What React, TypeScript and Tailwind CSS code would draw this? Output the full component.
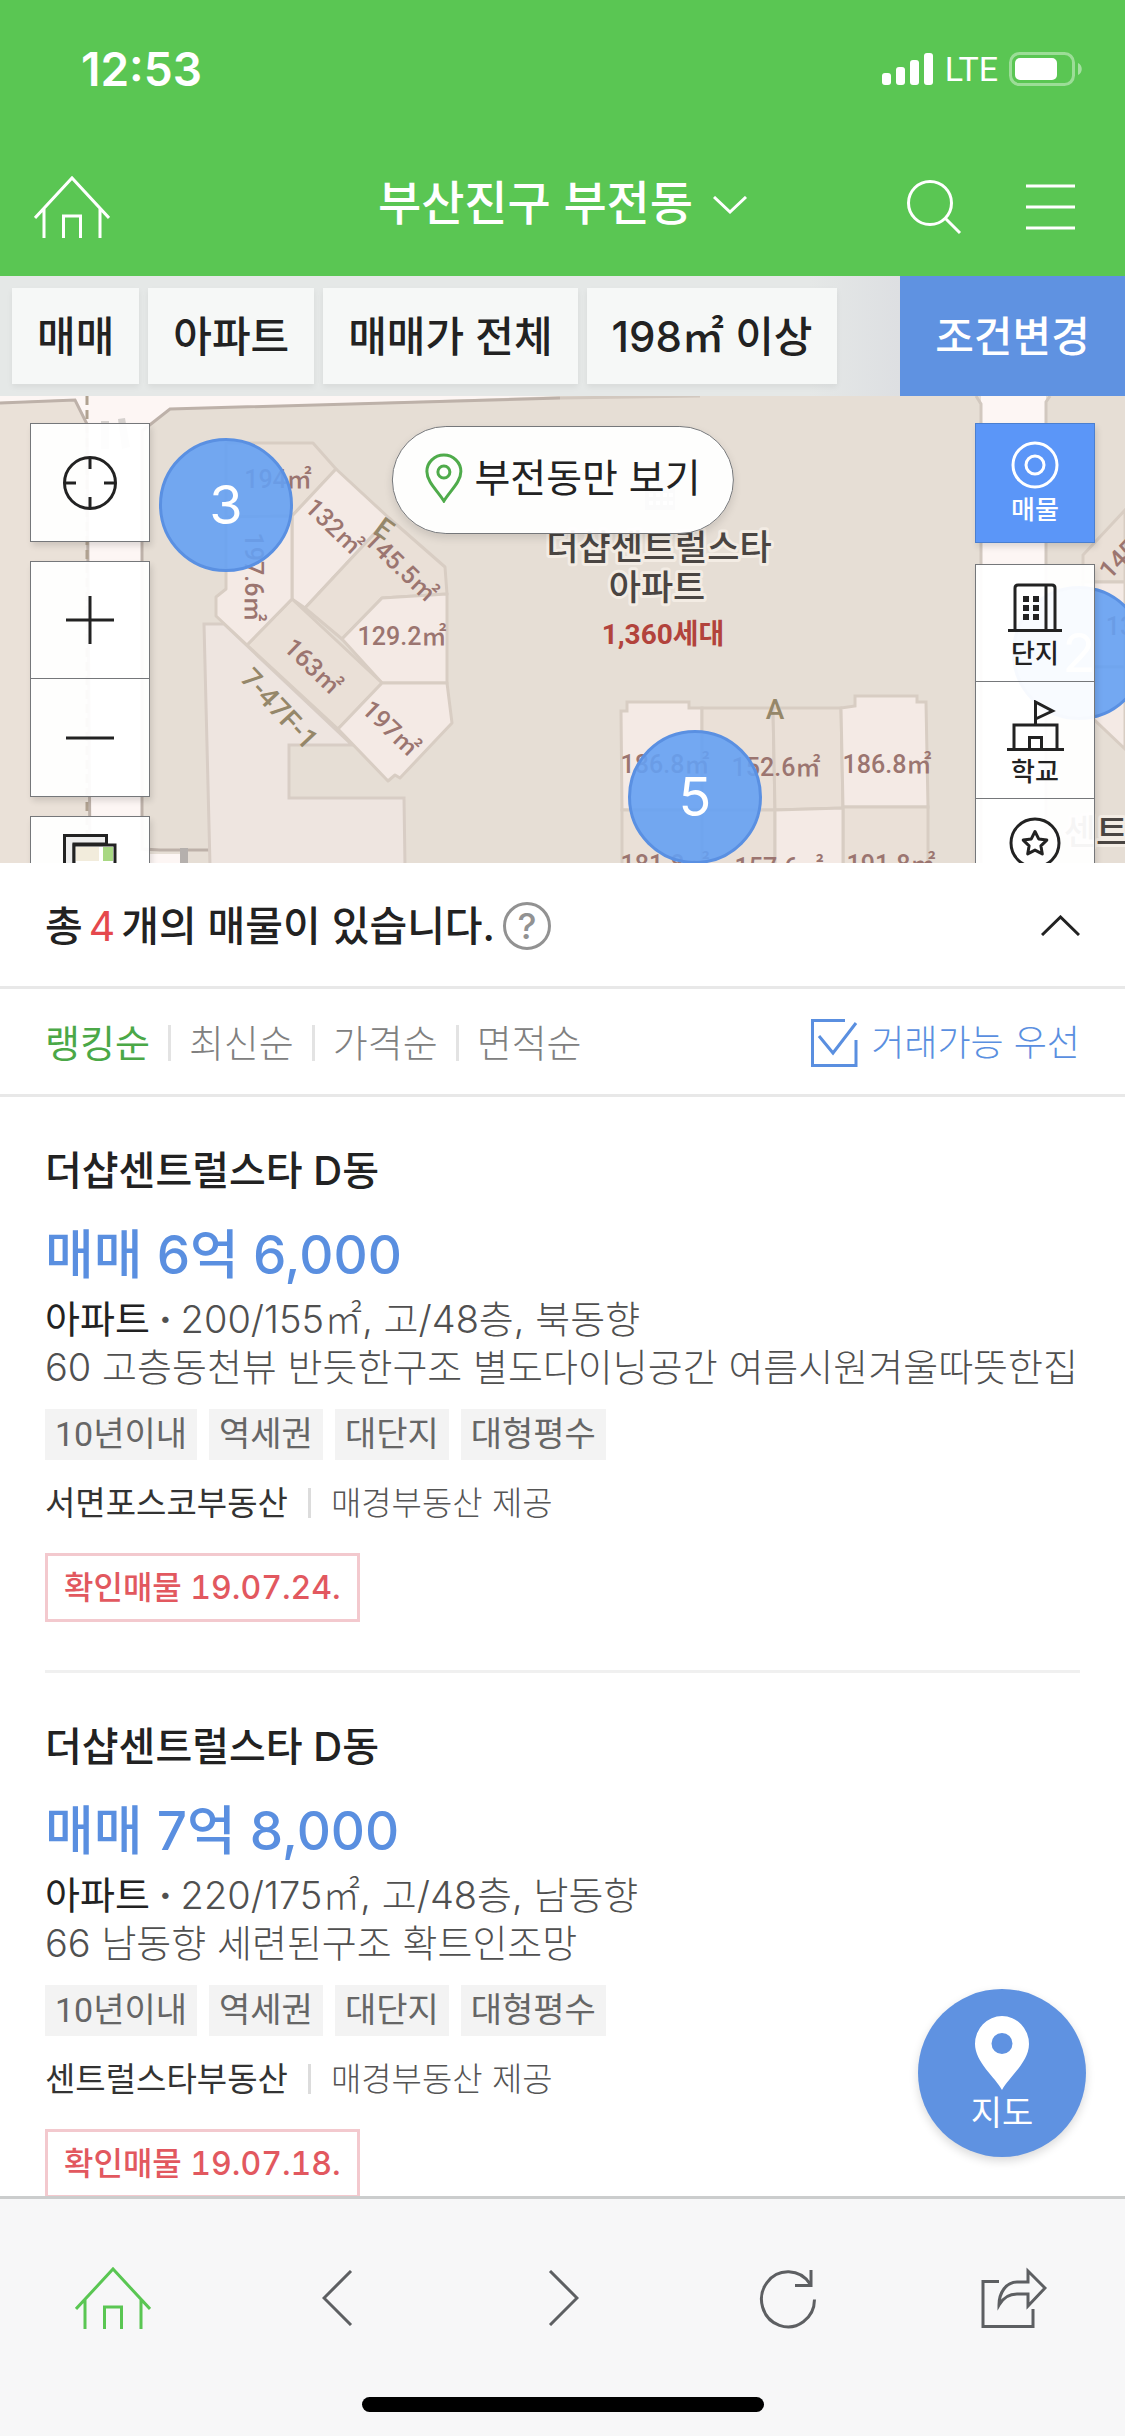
import { useState } from 'react'
import type { ReactNode } from 'react'

interface Listing {
  id: number
  name: string
  price: string
  spec: string
  description: string
  tags: string[]
  broker: string
  provider: string
  confirmedAt: string
}

const FILTERS = ['매매', '아파트', '매매가 전체', '198㎡ 이상']
const SORTS = ['랭킹순', '최신순', '가격순', '면적순']

const LISTINGS: Listing[] = [
  {
    id: 1,
    name: '더샵센트럴스타 D동',
    price: '매매 6억 6,000',
    spec: '200/155㎡, 고/48층, 북동향',
    description: '60 고층동천뷰 반듯한구조 별도다이닝공간 여름시원겨울따뜻한집',
    tags: ['10년이내', '역세권', '대단지', '대형평수'],
    broker: '서면포스코부동산',
    provider: '매경부동산 제공',
    confirmedAt: '19.07.24.',
  },
  {
    id: 2,
    name: '더샵센트럴스타 D동',
    price: '매매 7억 8,000',
    spec: '220/175㎡, 고/48층, 남동향',
    description: '66 남동향 세련된구조 확트인조망',
    tags: ['10년이내', '역세권', '대단지', '대형평수'],
    broker: '센트럴스타부동산',
    provider: '매경부동산 제공',
    confirmedAt: '19.07.18.',
  },
]

function HomeIcon() {
  return (
    <svg className="w-[76px] h-[64px]" viewBox="0 0 76 64" fill="none" stroke="currentColor" strokeWidth={3}>
      <path d="M1 43L38 3l37 40M10 34v29M66 34v29M29.500 63V41h17v22" />
    </svg>
  )
}

function StatusBar() {
  return (
    <div className="flex h-[138px] items-center justify-between pl-[81px] pr-[42px]">
      <span className="text-[46px] leading-none font-semibold">12:53</span>
      <div className="flex items-center">
        <svg className="w-[52px] h-[34px]" viewBox="0 0 52 34" fill="currentColor">
          <rect x="0" y="21" width="9" height="12" rx="3" />
          <rect x="14" y="15" width="9" height="18" rx="3" />
          <rect x="28" y="8" width="9" height="25" rx="3" />
          <rect x="42" y="1" width="9" height="32" rx="3" />
        </svg>
        <span className="mx-[11px] [font-family:Roboto,sans-serif] text-[34px] leading-none">LTE</span>
        <svg className="w-[74px] h-[34px]" viewBox="0 0 74 34" fill="none">
          <rect x="1.500" y="1.500" width="63" height="31" rx="9" stroke="#fff" strokeOpacity=".4" strokeWidth="3" />
          <rect x="6" y="6" width="42" height="22" rx="5" fill="#fff" />
          <path d="M69 11c5 2 5 10 0 12z" fill="#fff" fillOpacity=".45" />
        </svg>
      </div>
    </div>
  )
}

function Header() {
  return (
    <header className="relative shrink-0 bg-[#5ac653] text-white">
      <StatusBar />
      <div className="grid h-[138px] grid-cols-[1fr_auto_1fr] items-center px-[34px]">
        <button aria-label="홈" className="justify-self-start">
          <HomeIcon />
        </button>
        <button className="flex items-center gap-[20px] pb-2 text-[47px] leading-[60px] font-medium">
          부산진구 부전동
          <svg className="mt-1 w-[34px] h-[18px]" viewBox="0 0 34 18" fill="none" stroke="currentColor" strokeWidth={3}>
            <path d="M1 1l16 15L33 1" />
          </svg>
        </button>
        <div className="flex items-center gap-[64px] justify-self-end pr-4">
          <button aria-label="검색">
            <svg className="w-[56px] h-[56px]" viewBox="0 0 56 56" fill="none" stroke="currentColor" strokeWidth={3}>
              <circle cx="24" cy="24" r="21.500" />
              <path d="M39 39l15 15" />
            </svg>
          </button>
          <button aria-label="메뉴">
            <svg className="w-[49px] h-[48px]" viewBox="0 0 49 48" fill="none" stroke="currentColor" strokeWidth={3}>
              <path d="M0 3h49M0 24h49M0 45h49" />
            </svg>
          </button>
        </div>
      </div>
    </header>
  )
}

function FilterBar() {
  return (
    <div className="flex h-[120px] shrink-0 items-stretch bg-[#e5e8e7] text-[42px] font-medium">
      <div className="flex flex-1 items-center gap-[9px] bg-linear-to-r from-transparent from-90% to-[#dddfe2] pl-3">
        {FILTERS.map(label => (
          <button
            key={label}
            className="h-24 bg-[#f6f8f7] px-[25px] whitespace-nowrap text-[#222] shadow-[0_3px_6px_rgba(0,0,0,0.06)]"
          >
            {label}
          </button>
        ))}
      </div>
      <button className="w-[225px] bg-[#5f92e1] text-white">조건변경</button>
    </div>
  )
}

function MapCanvas() {
  return (
    <svg
      className="absolute inset-0 h-full w-full"
      viewBox="0 0 1125 467"
      preserveAspectRatio="xMidYMid slice"
      fontFamily="Roboto, 'Noto Sans CJK KR', sans-serif"
    >
      <rect width="1125" height="467" fill="#e6ded5" />

      {/* roads */}
      <path d="M0 0H560L170 13 142 35V453L150 458H185V467H90L87 27 75 3 0 6z" fill="#fdf6f4" />
      <path d="M981 0h65v467h-65z" fill="#fdf6f4" />
      <path d="M0 6L75 3l12 24 3 440H0z" fill="#eae1d8" />
      <g fill="none" stroke="#bdb1a9" strokeWidth="3">
        <path d="M0 7L75 4l12 24 3 440M560 2L170 13l-28 22v418l18 1h50" />
        <path d="M560 2L700 0M976 0l5 8v460M1050 0l-4 6v462" stroke="#d2c8bf" />
      </g>
      <path d="M87 0v467" stroke="#b0a190" strokeWidth="3" strokeDasharray="9 5" />
      <path d="M101 25h8v28h-8zM118 23l7-1 5 29-8 2z" fill="#d6d1ce" />
      <path d="M180 452h8v15h-8z" fill="#b5b0ad" />

      {/* lower annex */}
      <path
        d="M204 228h20l128 121h-63v53h115l1 68H210z"
        fill="#eee5e0"
        stroke="#d8cdc5"
        strokeWidth="3"
      />

      {/* tower E */}
      <g stroke="#d8cdc3" strokeWidth="3" strokeLinejoin="round">
        <path d="M226 47h87l23 26-44 47-66 1z" fill="#eae0d7" />
        <path d="M336 73l53 49-84 90-13-9v-83z" fill="#f4eae5" />
        <path d="M389 122l56 49 2 27-65 4-40 41-37-31z" fill="#eae0d7" />
        <path d="M382 202l65-4v89h-65l-40-44z" fill="#f4eae5" />
        <path d="M292 203l90 84-44 46-91-84z" fill="#eae0d7" />
        <path d="M382 287h65l5 40-52 55-5-3-7 6-50-52z" fill="#f4eae5" />
        <path d="M226 121l66-1v83l-45 46-31-29v-19l10-8z" fill="#f4eae5" />
      </g>

      {/* tower A */}
      <g stroke="#d8cdc3" strokeWidth="3">
        <path d="M621 315h6v-9h62v6h13v102h-80z" fill="#f4eae5" />
        <path d="M702 312h71l2 102h-73z" fill="#eae0d7" />
        <path d="M773 312h68l2 100-68 2z" fill="#eae0d7" />
        <path d="M841 312l14-2v-10h62v6h9l2 105h-85z" fill="#f4eae5" />
        <path d="M622 414h80v60h-80zM702 414h73v60h-73zM843 411h85v60h-85z" fill="#eae0d7" />
        <path d="M775 414l68-2v60h-68z" fill="#f4eae5" />
      </g>

      {/* tower on the right edge */}
      <g stroke="#d8cdc3" strokeWidth="3">
        <path d="M1125 114l-42 45v27h42z" fill="#eae0d7" />
        <path d="M1083 186h42v85h-42z" fill="#f4eae5" />
        <path d="M1083 271h42v82l-42-40z" fill="#f4eae5" />
      </g>

      <g fill="#9b7570" fontSize="25" fontWeight="500" textAnchor="middle">
        <text x="278" y="92">194㎡</text>
        <text transform="translate(334 130) rotate(44)" y="9">132㎡</text>
        <text transform="translate(401 170) rotate(44)" y="9">145.5㎡</text>
        <text x="402" y="249">129.2㎡</text>
        <text transform="translate(313 270) rotate(44)" y="9">163㎡</text>
        <text transform="translate(391 332) rotate(44)" y="9">197㎡</text>
        <text transform="translate(254 181) rotate(90)" y="9">197.6㎡</text>
        <text x="665" y="377">186.8㎡</text>
        <text x="776" y="380">152.6㎡</text>
        <text x="887" y="377">186.8㎡</text>
        <text x="665" y="477">181.8㎡</text>
        <text x="779" y="480">157.6㎡</text>
        <text x="891" y="477">191.8㎡</text>
        <text transform="translate(1118 163) rotate(-46)" y="9">145</text>
        <text x="1120" y="239">13</text>
      </g>
      <g fill="#958769" fontSize="28" fontWeight="500" textAnchor="middle">
        <text transform="translate(384 133) rotate(36)" y="9">E</text>
        <text transform="translate(279 313) rotate(47)" y="9">7-47F-1</text>
        <text x="775" y="323">A</text>
      </g>
      <g
        fill="#4a4542"
        stroke="#f3ece4"
        strokeWidth="6"
        strokeLinejoin="round"
        paintOrder="stroke"
        fontSize="35"
        fontWeight="500"
        textAnchor="middle"
      >
        <text x="659" y="164">더샵센트럴스타</text>
        <text x="657" y="204">아파트</text>
        <text x="1112" y="449">센트럴</text>
      </g>
      <text x="663" y="248" fill="#b2433c" fontSize="28" fontWeight="700" textAnchor="middle">
        1,360세대
      </text>
      <path d="M645 92h12v-8h18v30h-30z" fill="#a9a9a9" />
      <path
        d="M649 97h4v4h-4zM656 97h4v4h-4zM663 97h4v4h-4zM669 97h4v4h-4zM649 105h4v4h-4zM656 105h4v4h-4zM663 105h4v4h-4zM669 105h4v4h-4z"
        fill="#fff"
      />
    </svg>
  )
}

function Marker({ count, className }: { count: number; className: string }) {
  return (
    <button
      className={`absolute flex h-[134px] w-[134px] items-center justify-center rounded-full border-[3px] border-[#5a90e2] bg-[#65a1f3]/90 text-[54px] leading-none text-white ${className}`}
    >
      {count}
    </button>
  )
}

function MapButton({ label, children }: { label: string; children: ReactNode }) {
  return (
    <button
      aria-label={label}
      className="flex h-[117px] w-full shrink-0 items-center justify-center border-b border-[#75777a] last:border-b-0"
    >
      {children}
    </button>
  )
}

function LayerButton({ label, children }: { label: string; children: ReactNode }) {
  return (
    <button className="flex h-[117px] w-full shrink-0 flex-col items-center gap-1 border-b border-[#75777a] pt-[18px] text-[26px] leading-[34px] font-medium last:border-b-0">
      {children}
      {label}
    </button>
  )
}

function MapView() {
  const panel = 'w-[120px] border border-[#75777a] bg-white/95 text-[#222] shadow-[2px_4px_6px_rgba(0,0,0,0.12)]'

  return (
    <section className="relative h-[467px] shrink-0 overflow-hidden">
      <MapCanvas />
      <Marker count={3} className="top-[42px] left-[159px]" />
      <Marker count={5} className="top-[334px] left-[628px]" />
      <Marker count={2} className="top-[190px] left-[1012px]" />

      <div className="absolute top-[27px] left-[30px] flex flex-col gap-[19px]">
        <div className={panel}>
          <MapButton label="현재 위치">
            <svg className="w-[56px] h-[56px]" viewBox="0 0 56 56" fill="none" stroke="currentColor" strokeWidth={3}>
              <circle cx="28" cy="28" r="25.500" />
              <path d="M28 2v12M28 42v12M2 28h12M42 28h12" />
            </svg>
          </MapButton>
        </div>
        <div className={panel}>
          <MapButton label="확대">
            <svg className="w-[48px] h-[48px]" viewBox="0 0 48 48" fill="none" stroke="currentColor" strokeWidth={3}>
              <path d="M0 24h48M24 0v48" />
            </svg>
          </MapButton>
          <MapButton label="축소">
            <svg className="w-[48px] h-[48px]" viewBox="0 0 48 48" fill="none" stroke="currentColor" strokeWidth={3}>
              <path d="M0 24h48" />
            </svg>
          </MapButton>
        </div>
        <div className={panel}>
          <MapButton label="지도 유형">
            <svg className="mb-[24px] w-[54px] h-[60px]" viewBox="0 0 54 60" fill="none" strokeWidth={3}>
              <path d="M1.500 44V1.500h42V10H11v34z" fill="#eee" stroke="#222" />
              <rect x="11" y="11" width="41" height="41" fill="#fff" stroke="#222" />
              <path d="M13 13h23v14H13z" fill="#f2ecdc" />
              <path d="M40 13h10v14H40z" fill="#a8d883" />
              <path d="M13 31h9v8h-9z" fill="#f5dcb4" />
              <path d="M26 31h24v18H26z" fill="#f2ecdc" />
            </svg>
          </MapButton>
        </div>
      </div>

      <button className="absolute top-[30px] left-1/2 flex h-[108px] -translate-x-1/2 items-center gap-[12px] rounded-full border border-[#75777a] bg-white/95 px-8 pb-1 text-[39px] whitespace-nowrap text-[#222] shadow-[0_4px_8px_rgba(0,0,0,0.12)]">
        <svg className="w-[38px] h-[50px]" viewBox="0 0 38 50" fill="none" stroke="#4fab4b" strokeWidth={3}>
          <path d="M19 48C13 38 2 29 2 18.500a17 16.500 0 0134 0C36 29 25 38 19 48z" />
          <circle cx="19" cy="19" r="6" />
        </svg>
        부전동만 보기
      </button>

      <div className="absolute top-[27px] right-[30px] flex flex-col gap-[21px]">
        <button className="flex h-[120px] w-[120px] flex-col items-center gap-1 border border-[#4a7fd0] bg-[#5b96f8] pt-[17px] text-[26px] leading-[34px] font-medium text-white shadow-[2px_4px_6px_rgba(0,0,0,0.12)]">
          <svg className="w-[48px] h-[48px]" viewBox="0 0 48 48" fill="none" stroke="currentColor" strokeWidth={3}>
            <circle cx="24" cy="24" r="22" />
            <circle cx="24" cy="24" r="9" />
          </svg>
          매물
        </button>
        <div className={panel}>
          <LayerButton label="단지">
            <svg className="w-[54px] h-[50px]" viewBox="0 0 54 50" fill="none" stroke="currentColor" strokeWidth={3}>
              <path d="M7 47V5q0-3 3-3h34q3 0 3 3v42M38 2v45M0 47.500h54" />
              <g fill="currentColor" stroke="none">
                <path d="M15 13h6v6h-6zM25 13h6v6h-6zM15 22h6v6h-6zM25 22h6v6h-6zM15 31h6v6h-6zM25 31h6v6h-6z" />
              </g>
            </svg>
          </LayerButton>
          <LayerButton label="학교">
            <svg className="w-[57px] h-[51px]" viewBox="0 0 57 51" fill="none" stroke="currentColor" strokeWidth={3}>
              <path d="M0 49.500h57M7 49V25h43v24M22.500 49V37.500h12V49M28.500 25V2l17 9-17 8" />
            </svg>
          </LayerButton>
          <LayerButton label="관심">
            <svg className="w-[52px] h-[52px] shrink-0" viewBox="0 0 52 52" fill="none" stroke="currentColor" strokeWidth={3}>
              <circle cx="26" cy="26" r="24" />
              <path d="M26 14.500l3.700 7.400 8.100 1.200-5.900 5.700 1.400 8.100-7.300-3.800-7.300 3.800 1.400-8.100-5.900-5.700 8.100-1.200z" strokeLinejoin="round" />
            </svg>
          </LayerButton>
        </div>
      </div>
    </section>
  )
}

function ResultSummary({ count }: { count: number }) {
  return (
    <div className="flex h-[126px] shrink-0 items-center justify-between border-b-[3px] border-[#e8e8e8] px-[45px] pt-0.5">
      <div className="flex items-center">
        <h1 className="text-[41px] leading-[56px] font-medium whitespace-nowrap text-[#222]">
          총<span className="mx-1.5 font-normal text-[#e5484d]">{count}</span>개의 매물이 있습니다.
        </h1>
        <button
          aria-label="도움말"
          className="ml-2 flex h-[48px] w-[48px] items-center justify-center rounded-full border-[3px] border-[#929292] text-[36px] leading-none font-medium text-[#929292]"
        >
          ?
        </button>
      </div>
      <button aria-label="접기">
        <svg className="w-[39px] h-[21px]" viewBox="0 0 39 21" fill="none" stroke="#222" strokeWidth={3}>
          <path d="M1 20L19.500 2 38 20" />
        </svg>
      </button>
    </div>
  )
}

function SortBar() {
  const [sort, setSort] = useState(SORTS[0])
  const [availableFirst, setAvailableFirst] = useState(true)

  return (
    <div className="flex h-[108px] shrink-0 items-center justify-between border-b-[3px] border-[#e8e8e8] px-[45px] pt-0.5">
      <div className="flex items-center divide-x-[3px] divide-[#e3e3e3] text-[38px] leading-[36px]">
        {SORTS.map(label => (
          <button
            key={label}
            onClick={() => setSort(label)}
            className={`px-[18px] first:pl-0 ${sort === label ? 'text-[#4ba847]' : 'font-light text-[#808080]'}`}
          >
            {label}
          </button>
        ))}
      </div>
      <label className="relative flex items-center gap-[12px] text-[36px] leading-[48px] font-light text-[#5a8fe0]">
        <input
          type="checkbox"
          checked={availableFirst}
          onChange={e => setAvailableFirst(e.target.checked)}
          className="absolute left-0 h-12 w-12 appearance-none"
        />
        <svg className="w-[48px] h-[48px]" viewBox="0 0 48 48" fill="none" stroke="currentColor" strokeWidth={3}>
          <path d="M34 1.500H1.500v45h43.500V21" />
          {availableFirst && <path d="M8 17l14 17L45 4" />}
        </svg>
        거래가능 우선
      </label>
    </div>
  )
}

function ListingCard({ item }: { item: Listing }) {
  return (
    <li className="border-b-[3px] border-[#f0f0f0] pt-[46px] pb-12">
      <h2 className="text-[40px] leading-[56px] font-medium text-[#222]">{item.name}</h2>
      <p className="mt-6 text-[53px] leading-[64px] font-medium text-[#5a8fe0]">{item.price}</p>
      <div className="mt-2 text-[38px] leading-[48px] font-light whitespace-nowrap text-[#505050]">
        <p>
          <span className="font-normal text-[#222]">아파트</span>
          <span className="font-bold"> · </span>
          {item.spec}
        </p>
        <p>{item.description}</p>
      </div>
      <ul className="mt-[18px] flex gap-3 [font-family:Roboto,'Noto_Sans_CJK_KR',sans-serif] text-[34px] leading-[51px] text-[#666]">
        {item.tags.map(tag => (
          <li key={tag} className="bg-[#f3f3f3] px-2.5">{tag}</li>
        ))}
      </ul>
      <div className="mt-[18px] flex items-center text-[33px] leading-[50px] text-[#555]">
        <span className="text-[#333]">{item.broker}</span>
        <span className="mx-5 h-[30px] w-[3px] bg-[#dcdcdc]" />
        <span className="font-light">{item.provider}</span>
      </div>
      <div className="mt-[25px] flex h-[69px] w-fit items-center border-[3px] border-[#f3c9ce] px-4 text-[32px] font-medium text-[#e2585f] tabular-nums">
        확인매물 {item.confirmedAt}
      </div>
    </li>
  )
}

function BottomBar() {
  return (
    <footer className="shrink-0 border-t-[3px] border-[#cbcdcd] bg-[#f7f7f8]">
      <nav className="grid h-[198px] grid-cols-5 place-items-center text-[#5d5f62]">
        <button aria-label="홈" className="text-[#5ac653]">
          <HomeIcon />
        </button>
        <button aria-label="뒤로">
          <svg className="w-[32px] h-[56px]" viewBox="0 0 32 56" fill="none" stroke="currentColor" strokeWidth={3}>
            <path d="M29 1L2 28l27 27" />
          </svg>
        </button>
        <button aria-label="앞으로">
          <svg className="w-[32px] h-[56px]" viewBox="0 0 32 56" fill="none" stroke="currentColor" strokeWidth={3}>
            <path d="M3 1l27 27L3 55" />
          </svg>
        </button>
        <button aria-label="새로고침">
          <svg className="w-[58px] h-[62px]" viewBox="0 0 58 62" fill="none" stroke="currentColor" strokeWidth={3}>
            <path d="M55.500 32.500A26.500 27.500 0 1151 17M52 3v15.500H36" />
          </svg>
        </button>
        <button aria-label="공유">
          <svg className="w-[68px] h-[62px]" viewBox="0 0 68 62" fill="none" stroke="currentColor" strokeWidth={3}>
            <path d="M20 14.500H4v45h50V42" />
            <path d="M49 4v11H38C27 15 20 26 20 38c4-7 9-11 18-11h11v12l17-18z" />
          </svg>
        </button>
      </nav>
      <div className="mx-auto mb-6 h-[15px] w-[402px] rounded-full bg-black" />
    </footer>
  )
}

export default function App() {
  return (
    <div className="flex h-screen flex-col overflow-hidden bg-white [font-family:Inter,'Noto_Sans_CJK_KR',sans-serif]">
      <Header />
      <FilterBar />
      <MapView />
      <ResultSummary count={4} />
      <SortBar />
      <main className="relative min-h-0 flex-1 overflow-hidden">
        <ul className="px-[45px]">
          {LISTINGS.map(item => (
            <ListingCard key={item.id} item={item} />
          ))}
        </ul>
        <button className="absolute right-[39px] bottom-[39px] flex h-[168px] w-[168px] flex-col items-center rounded-full bg-[#5f92e1] pt-[27px] text-[34px] leading-[46px] text-white shadow-[0_4px_10px_rgba(0,0,0,0.15)]">
          <svg className="w-[54px] h-[74px]" viewBox="0 0 54 74" fill="currentColor" fillRule="evenodd">
            <path d="M27 74C20 61 0 46 0 28a27 28 0 0154 0c0 18-20 33-27 46zM27 17a10.500 10.500 0 100 21 10.500 10.500 0 000-21z" />
          </svg>
          지도
        </button>
      </main>
      <BottomBar />
    </div>
  )
}
